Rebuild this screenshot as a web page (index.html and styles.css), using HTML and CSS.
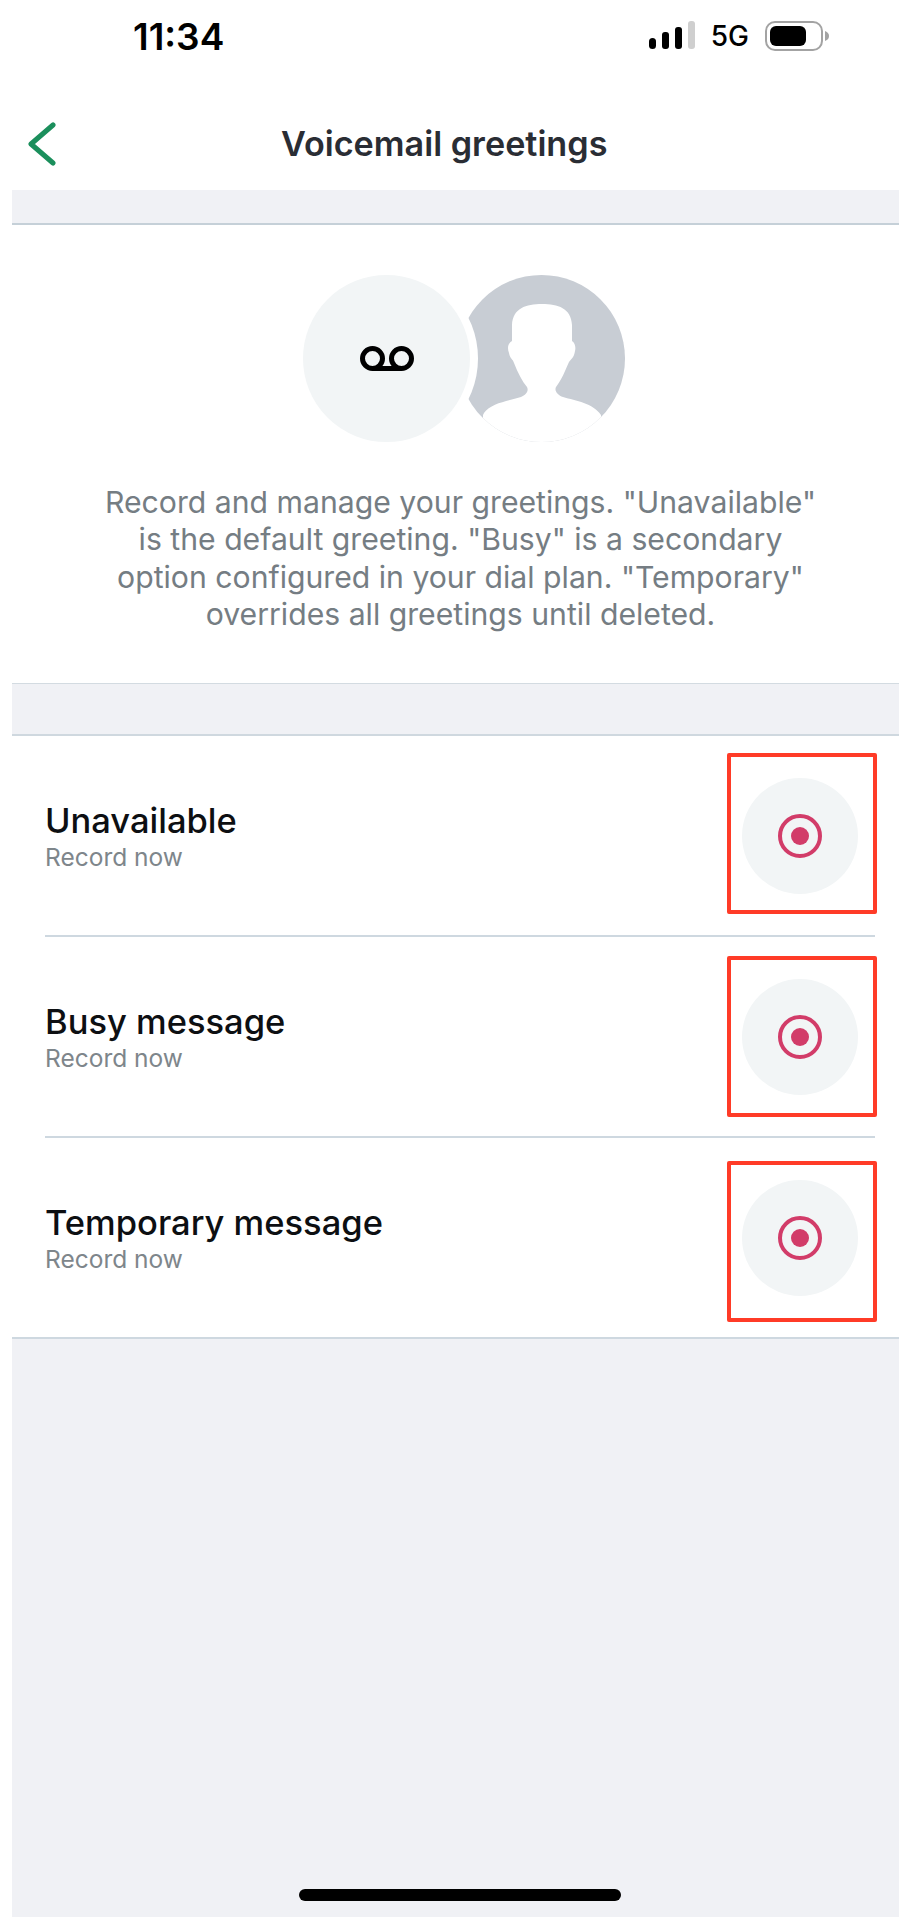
FILE: index.html
```html
<!DOCTYPE html>
<html lang="en">
<head>
<meta charset="utf-8">
<title>Voicemail greetings</title>
<link rel="stylesheet" href="styles.css">
</head>
<body>
<div class="screen">
  <header class="status">
    <span class="time">11:34</span>
    <div class="status-right">
      <svg class="signal" width="46" height="28" viewBox="0 0 46 28"><rect x="0" y="17" width="7" height="11" rx="3.5" fill="#000"/><rect x="13" y="11" width="7" height="17" rx="3" fill="#000"/><rect x="26" y="6" width="7" height="22" rx="3" fill="#000"/><rect x="39" y="0" width="7" height="28" rx="3" fill="#cfcfcf"/></svg>
      <span class="net">5G</span>
      <svg class="battery" width="65" height="30" viewBox="0 0 65 30"><rect x="1" y="1" width="56" height="28" rx="9" fill="#fff" stroke="#a3a3a3" stroke-width="2"/><rect x="5" y="5" width="36" height="20" rx="6" fill="#000"/><path d="M60 10c3 1 4 3 4 5s-1 4-4 5z" fill="#a3a3a3"/></svg>
    </div>
  </header>
  <nav class="nav">
    <svg class="back" width="28" height="44" viewBox="0 0 28 44"><path d="M25 3 3 22l22 19" fill="none" stroke="#1b8f5c" stroke-width="5" stroke-linecap="round" stroke-linejoin="round"/></svg>
    <h1 class="title">Voicemail greetings</h1>
  </nav>
  <div class="band band-top"></div>
  <section class="intro">
    <div class="avatars">
      <div class="avatar-person">
        <svg width="167" height="167" viewBox="0 0 167 167"><path d="M84 29C68 29 55 33 54 50V66C50 68 49 73 51 78 52 84 55 84 56 88 60 98 64 106 69 112 71 116 68 120 63 122 50 126 33 128 26 138L25 140V167H143V140C135 128 118 126 105 122 100 120 96 116 98 112 104 104 107 96 111 87 113 84 116 83 117 76 118 72 117 68 114 66V50C113 33 100 29 84 29Z" fill="#fff"/></svg>
      </div>
      <div class="avatar-icon">
        <svg width="54" height="25" viewBox="0 0 54 25"><circle cx="12.500" cy="12.500" r="10" fill="none" stroke="#000" stroke-width="5"/><circle cx="41.500" cy="12.500" r="10" fill="none" stroke="#000" stroke-width="5"/><path d="M12.500 22.500h29" stroke="#000" stroke-width="5"/></svg>
      </div>
    </div>
    <p class="intro-text">Record and manage your greetings. "Unavailable"<br>is the default greeting. "Busy" is a secondary<br>option configured in your dial plan. "Temporary"<br>overrides all greetings until deleted.</p>
  </section>
  <div class="band band-mid"></div>
  <section class="list">
    <div class="row row-one">
      <div class="row-text"><div class="row-title">Unavailable</div><div class="row-sub">Record now</div></div>
      <div class="rec"><span class="rec-ring"><span class="rec-dot"></span></span></div>
      <div class="mark mark-one"></div>
    </div>
    <div class="row row-two">
      <div class="row-text"><div class="row-title">Busy message</div><div class="row-sub">Record now</div></div>
      <div class="rec"><span class="rec-ring"><span class="rec-dot"></span></span></div>
      <div class="mark mark-two"></div>
    </div>
    <div class="row row-three">
      <div class="row-text"><div class="row-title">Temporary message</div><div class="row-sub">Record now</div></div>
      <div class="rec"><span class="rec-ring"><span class="rec-dot"></span></span></div>
      <div class="mark mark-three"></div>
    </div>
  </section>
  <div class="rest"><span class="home"></span></div>
</div>
</body>
</html>
```
FILE: styles.css
```css
* { box-sizing: border-box; }
html, body { margin: 0; padding: 0; background: #fff; }
body { width: 899px; height: 1930px; overflow: hidden; font-family: Inter, "Liberation Sans", sans-serif; }
.screen { padding-left: 12px; height: 1917px; display: flex; flex-direction: column; }

.status { height: 98px; flex: none; display: flex; align-items: flex-start; padding: 16px 69px 0 121px; }
.time { font-weight: 600; font-size: 37px; line-height: 42px; color: #000; }
.status-right { margin-left: auto; display: flex; align-items: flex-start; padding-top: 5px; }
.signal { display: block; }
.net { font-weight: 500; font-size: 28px; line-height: 30px; margin: 0 16px 0 16px; color: #000; }
.battery { display: block; }

.nav { height: 92px; flex: none; display: flex; align-items: center; padding-left: 16px; }
.back { flex: none; display: block; }
.title { margin: 0 0 0 225px; font-size: 34.200px; line-height: 40px; font-weight: 600; color: #2a2d34; }

.band { background: #f0f1f5; flex: none; }
.band-top { height: 35px; border-bottom: 2px solid #c5d0d8; }
.band-mid { height: 53px; border-top: 1px solid #d3dbe1; border-bottom: 2px solid #cfd8df; }

.intro { height: 458px; flex: none; display: flex; flex-direction: column; align-items: center; padding-top: 50px; }
.avatars { display: flex; width: 322px; height: 167px; margin-left: 17px; }
.avatar-icon { order: 1; width: 183px; height: 183px; margin: -8px 0 0 -8px; border: 8px solid #fff; border-radius: 50%; background: #f2f5f6; display: flex; align-items: center; justify-content: center; z-index: 1; flex: none; }
.avatar-person { order: 2; width: 167px; height: 167px; margin-left: -20px; border-radius: 50%; background: #c8cdd4; overflow: hidden; flex: none; }
.avatar-person svg { display: block; }
.intro-text { margin: 42px 0 0 10px; font-size: 30.200px; line-height: 37.300px; text-align: center; color: #757d83; }

.list { flex: none; }
.row { position: relative; height: 201px; margin-left: 33px; width: 830px; display: flex; align-items: center; justify-content: space-between; border-bottom: 2px solid #ced8e0; }
.row-three { margin-left: 0; width: auto; padding-left: 33px; padding-right: 24px; height: 201px; }
.row-text { display: flex; flex-direction: column; padding-top: 2px; }
.row-title { font-size: 34.500px; line-height: 38px; font-weight: 500; color: #0d0f12; }
.row-sub { font-size: 24.500px; line-height: 30px; margin-top: 2px; color: #7e868b; }
.rec { flex: none; width: 116px; height: 116px; border-radius: 50%; background: #f2f5f6; display: flex; align-items: center; justify-content: center; margin-right: 17px; }
.rec-ring { width: 44px; height: 44px; border: 4px solid #d23c69; border-radius: 50%; display: flex; align-items: center; justify-content: center; }
.rec-dot { width: 18px; height: 18px; border-radius: 50%; background: #d23c69; }

.mark { position: absolute; right: -2px; width: 150px; height: 161px; border: 4px solid #ff3b27; border-radius: 2px; pointer-events: none; }
.mark-one { top: 17px; }
.mark-two { top: 19px; }
.mark-three { top: 23px; right: 22px; }

.rest { flex: 1; background: #f0f1f5; display: flex; justify-content: center; align-items: flex-start; padding: 550px 0 0 9px; }
.home { width: 322px; height: 12px; border-radius: 6px; background: #000; }
```
